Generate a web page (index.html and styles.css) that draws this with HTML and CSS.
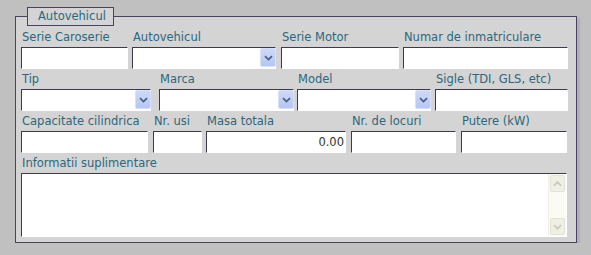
FILE: index.html
```html
<!DOCTYPE html>
<html lang="ro">
  <head>
    <meta charset="UTF-8" />
    <meta name="viewport" content="width=device-width, initial-scale=1.0" />
    <link rel="stylesheet" href="styles.css">
    <title>Autovehicul</title>
  </head>
  <body>
    <div class="page">
      <fieldset class="group">
        <legend>Autovehicul</legend>

        <div class="row row-1">
          <div class="field">
            <label>Serie Caroserie</label>
            <input type="text" class="w-caroserie">
          </div>
          <div class="field">
            <label>Autovehicul</label>
            <div class="select w-autovehicul">
              <select></select>
              <span class="select-btn"><svg width="9" height="6" viewBox="0 0 9 6"><path d="M1 1.2 L4.5 4.6 L8 1.2" fill="none" stroke="#4a5f8c" stroke-width="1.8"/></svg></span>
            </div>
          </div>
          <div class="field">
            <label>Serie Motor</label>
            <input type="text" class="w-motor">
          </div>
          <div class="field">
            <label>Numar de inmatriculare</label>
            <input type="text" class="w-numar">
          </div>
        </div>

        <div class="row row-2">
          <div class="field">
            <label>Tip</label>
            <div class="select w-tip">
              <select></select>
              <span class="select-btn"><svg width="9" height="6" viewBox="0 0 9 6"><path d="M1 1.2 L4.5 4.6 L8 1.2" fill="none" stroke="#4a5f8c" stroke-width="1.8"/></svg></span>
            </div>
          </div>
          <div class="field">
            <label>Marca</label>
            <div class="select w-marca">
              <select></select>
              <span class="select-btn"><svg width="9" height="6" viewBox="0 0 9 6"><path d="M1 1.2 L4.5 4.6 L8 1.2" fill="none" stroke="#4a5f8c" stroke-width="1.8"/></svg></span>
            </div>
          </div>
          <div class="field">
            <label>Model</label>
            <div class="select w-model">
              <select></select>
              <span class="select-btn"><svg width="9" height="6" viewBox="0 0 9 6"><path d="M1 1.2 L4.5 4.6 L8 1.2" fill="none" stroke="#4a5f8c" stroke-width="1.8"/></svg></span>
            </div>
          </div>
          <div class="field">
            <label>Sigle (TDI, GLS, etc)</label>
            <input type="text" class="w-sigle">
          </div>
        </div>

        <div class="row row-3">
          <div class="field">
            <label>Capacitate cilindrica</label>
            <input type="text" class="w-capacitate">
          </div>
          <div class="field">
            <label>Nr. usi</label>
            <input type="text" class="w-usi">
          </div>
          <div class="field">
            <label>Masa totala</label>
            <input type="text" class="w-masa num" value="0.00">
          </div>
          <div class="field">
            <label>Nr. de locuri</label>
            <input type="text" class="w-locuri">
          </div>
          <div class="field">
            <label>Putere (kW)</label>
            <input type="text" class="w-putere">
          </div>
        </div>

        <div class="field">
          <label>Informatii suplimentare</label>
          <div class="memo">
            <textarea></textarea>
            <div class="scrollbar">
              <span class="scroll-btn"><svg width="9" height="6" viewBox="0 0 9 6"><path d="M1 4.6 L4.5 1.2 L8 4.6" fill="none" stroke="#c9c9b9" stroke-width="1.8"/></svg></span>
              <span class="scroll-btn"><svg width="9" height="6" viewBox="0 0 9 6"><path d="M1 1.2 L4.5 4.6 L8 1.2" fill="none" stroke="#c9c9b9" stroke-width="1.8"/></svg></span>
            </div>
          </div>
        </div>
      </fieldset>
    </div>
  </body>
</html>
```

FILE: styles.css
```css
body {
  margin: 0;
  background-color: #c0c0c0;
  font-family: "DejaVu Sans", Verdana, sans-serif;
  font-size: 11.5px;
}

.page {
  padding: 7px 0 0 15px;
}

.group {
  width: 547px;
  margin: 0;
  padding: 1px 8px 5px 5px;
  background-color: #d4d4d4;
  border: 1px solid #4b4260;
  box-shadow: 3px 2px 2px rgba(130, 110, 150, 0.25);
}

.group legend {
  margin-left: 6px;
  padding: 0 7px 0 10px;
  height: 17px;
  line-height: 17px;
  color: #2b687d;
  background-color: #d4d4d4;
  border: 1px solid #4b4260;
}

.row {
  display: grid;
}
.row-1 {
  grid-template-columns: 111px 149px 122px 1fr;
}
.row-2 {
  grid-template-columns: 138px 138px 138px 1fr;
}
.row-3 {
  grid-template-columns: 132px 53px 145px 110px 1fr;
}

.field label {
  display: block;
  height: 20px;
  line-height: 20px;
  padding-left: 1px;
  color: #2b687d;
  white-space: nowrap;
}

input,
select,
textarea {
  box-sizing: border-box;
  display: block;
  margin: 0;
  font-family: inherit;
  font-size: 11.5px;
  background-color: #fff;
  border: 1px solid;
  border-color: #3e3a4c #fff #fff #3e3a4c;
  outline: none;
}

input {
  height: 22px;
  padding: 0 2px;
}
input.num {
  text-align: right;
  color: #333;
  padding-right: 1px;
}

.select {
  position: relative;
  height: 22px;
}
.select select {
  appearance: none;
  width: 100%;
  height: 22px;
}
.select-btn {
  position: absolute;
  top: 1px;
  right: 0;
  width: 14px;
  height: 17px;
  display: flex;
  align-items: center;
  justify-content: center;
  background: linear-gradient(#cdd9f7, #b5c7f1);
  border: 1px solid #d6e0fa;
  border-radius: 2px;
}

.w-caroserie { width: 107px; }
.w-autovehicul { width: 144px; }
.w-motor { width: 118px; }
.w-numar { width: 165px; }
.w-tip { width: 130px; }
.w-marca { width: 135px; }
.w-model { width: 134px; }
.w-sigle { width: 133px; }
.w-capacitate { width: 127px; }
.w-usi { width: 49px; }
.w-masa { width: 140px; }
.w-locuri { width: 105px; }
.w-putere { width: 106px; }

.memo {
  position: relative;
  width: 546px;
  height: 64px;
}
.memo textarea {
  width: 100%;
  height: 100%;
  resize: none;
  overflow: hidden;
}
.scrollbar {
  position: absolute;
  top: 1px;
  right: 1px;
  bottom: 1px;
  width: 17px;
  display: flex;
  flex-direction: column;
  justify-content: space-between;
  background-color: #fbfbf4;
  border-left: 1px solid #eeeee6;
}
.scroll-btn {
  height: 15px;
  margin: 1px 1px;
  display: flex;
  align-items: center;
  justify-content: center;
  background-color: #efefe6;
  border: 1px solid #e2e2d6;
  border-radius: 2px;
}
```
